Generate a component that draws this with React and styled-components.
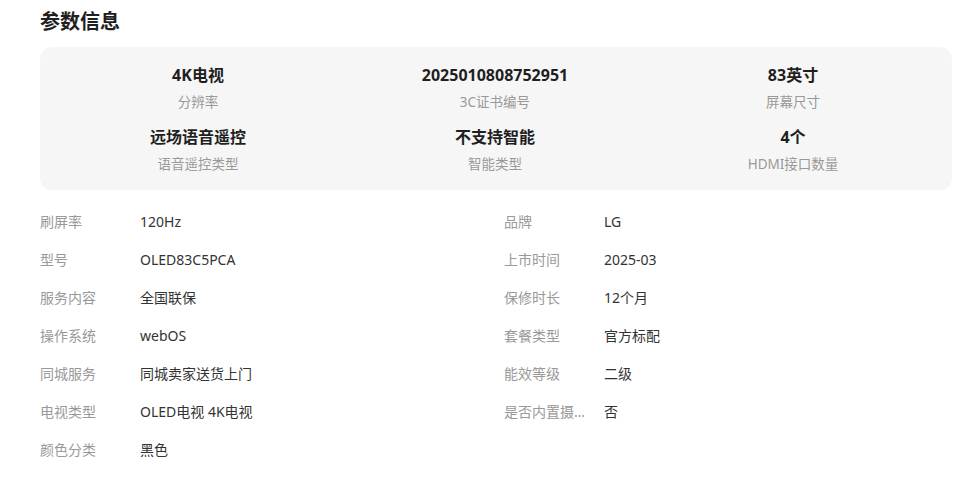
import * as React from "react";
import styled, { createGlobalStyle } from "styled-components";

const GlobalStyle = createGlobalStyle`
  html, body {
    margin: 0;
    padding: 0;
    background: #fff;
  }
  body {
    font-family: "Noto Sans", "Noto Sans CJK SC", sans-serif;
    color: #222;
  }
`;

const Page = styled.div`
  padding: 8px 18px 0 40px;
  width: 912px;
`;

const Title = styled.h2`
  margin: 0 0 11px;
  font-size: 20px;
  line-height: 28px;
  font-weight: 700;
  color: #1f1f1f;
`;

const Highlights = styled.div`
  display: grid;
  grid-template-columns: repeat(3, 1fr);
  row-gap: 12px;
  padding: 16px 0 15px;
  background: #f6f6f6;
  border-radius: 12px;
`;

const Cell = styled.div`
  display: flex;
  flex-direction: column;
  align-items: center;
  transform: translateX(${(p) => p.shift}px);
`;

const CellValue = styled.div`
  font-size: 16px;
  line-height: 24px;
  font-weight: 700;
  color: #1f1f1f;
`;

const CellLabel = styled.div`
  margin-top: 4px;
  font-size: 13.5px;
  line-height: 22px;
  color: #999;
`;

const Specs = styled.div`
  display: grid;
  grid-template-columns: 464px 1fr;
  padding-top: 12px;
`;

const Spec = styled.div`
  display: flex;
  align-items: center;
  height: 38px;
  font-size: 14px;
`;

const SpecLabel = styled.span`
  width: 84px;
  margin-right: 16px;
  color: #999;
  white-space: nowrap;
  overflow: hidden;
  text-overflow: ellipsis;
`;

const SpecValue = styled.span`
  color: #333;
`;

const highlights = [
  { value: "4K电视", label: "分辨率", shift: 6 },
  { value: "2025010808752951", label: "3C证书编号", shift: -1 },
  { value: "83英寸", label: "屏幕尺寸", shift: -7 },
  { value: "远场语音遥控", label: "语音遥控类型", shift: 6 },
  { value: "不支持智能", label: "智能类型", shift: -1 },
  { value: "4个", label: "HDMI接口数量", shift: -7 },
];

const specs = [
  ["刷屏率", "120Hz"],
  ["品牌", "LG"],
  ["型号", "OLED83C5PCA"],
  ["上市时间", "2025-03"],
  ["服务内容", "全国联保"],
  ["保修时长", "12个月"],
  ["操作系统", "webOS"],
  ["套餐类型", "官方标配"],
  ["同城服务", "同城卖家送货上门"],
  ["能效等级", "二级"],
  ["电视类型", "OLED电视 4K电视"],
  ["是否内置摄像头", "否"],
  ["颜色分类", "黑色"],
];

const App = () => {
  return (
    <>
      <GlobalStyle />
      <Page>
        <Title>参数信息</Title>
        <Highlights>
          {highlights.map((h) => (
            <Cell key={h.label} shift={h.shift}>
              <CellValue>{h.value}</CellValue>
              <CellLabel>{h.label}</CellLabel>
            </Cell>
          ))}
        </Highlights>
        <Specs>
          {specs.map(([label, value]) => (
            <Spec key={label}>
              <SpecLabel>{label}</SpecLabel>
              <SpecValue>{value}</SpecValue>
            </Spec>
          ))}
        </Specs>
      </Page>
    </>
  );
};

export default App;
